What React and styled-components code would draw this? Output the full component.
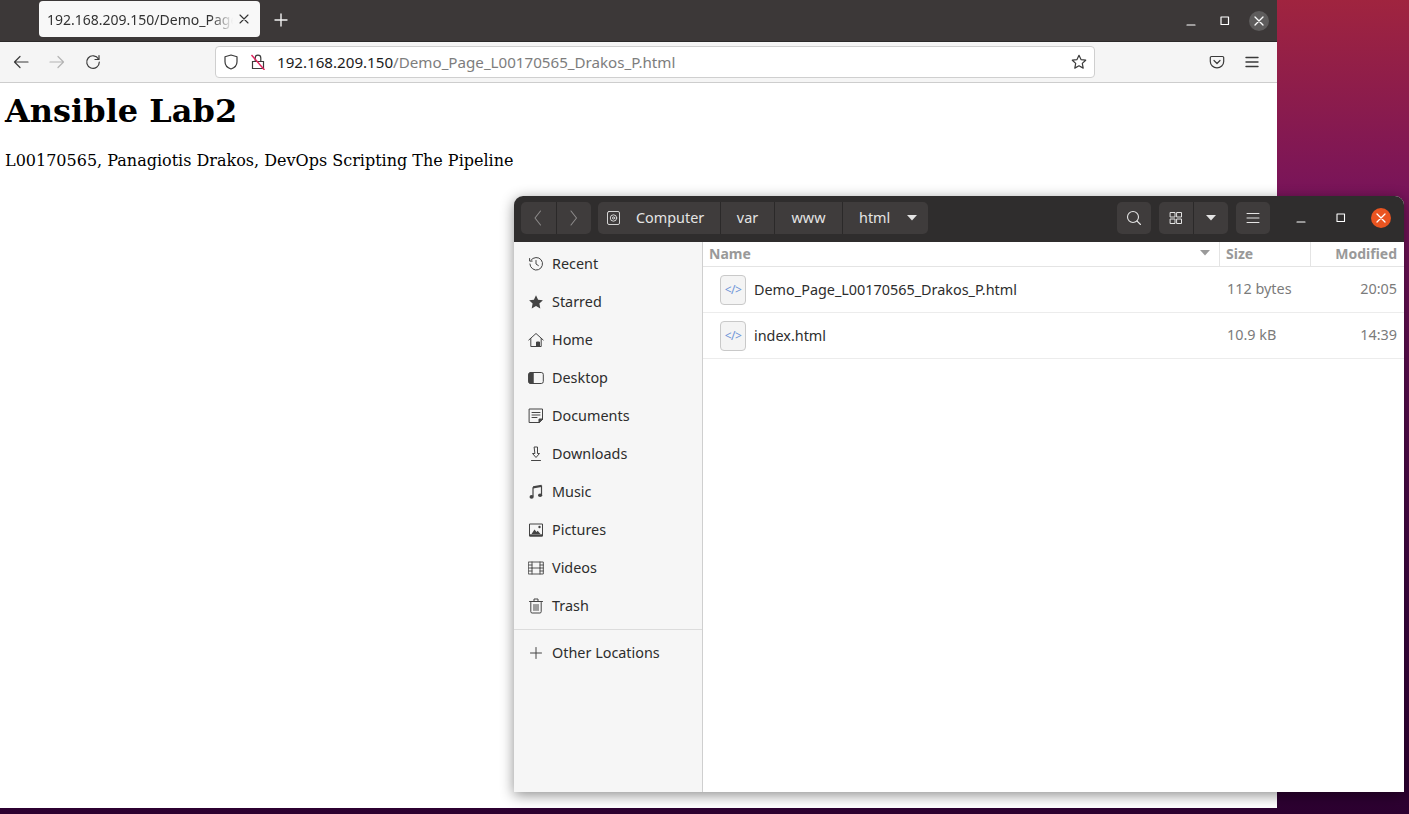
import React from "react";
import styled, { createGlobalStyle } from "styled-components";

const Global = createGlobalStyle`
  html, body { margin: 0; padding: 0; width: 1409px; height: 814px; overflow: hidden; }
  body { font-family: "Noto Sans", "Open Sans", sans-serif; }
`;

const Desktop = styled.div`
  position: relative;
  width: 1409px;
  height: 814px;
  overflow: hidden;
  background: linear-gradient(180deg, #a0243f 0%, #8c1c4c 12%, #78145a 24%, #5c0e50 45%, #3c0640 75%, #2c0030 100%);
`;

const Browser = styled.div`
  position: absolute;
  left: 0;
  top: 0;
  width: 1277px;
  height: 808px;
  display: flex;
  flex-direction: column;
  background: #fff;
`;

const TabStrip = styled.div`
  height: 42px;
  flex: none;
  display: flex;
  align-items: center;
  padding-left: 39px;
  background: #3c3838;
  border-bottom: 1px solid #2b2929;
  box-sizing: border-box;
`;

const Tab = styled.div`
  width: 221px;
  height: 36px;
  margin-top: -3px;
  box-sizing: border-box;
  padding: 0 11px 0 8px;
  display: flex;
  align-items: center;
  justify-content: space-between;
  background: #f8f8f8;
  border-radius: 4px;
  color: #333;
  font-size: 14px;
`;

const TabTitle = styled.span`
  width: 186px;
  white-space: nowrap;
  overflow: hidden;
  -webkit-mask-image: linear-gradient(to right, #000 88%, transparent 100%);
  mask-image: linear-gradient(to right, #000 88%, transparent 100%);
`;

const NewTab = styled.div`
  width: 14px;
  height: 14px;
  margin-left: 14px;
  margin-top: -1px;
  color: #f2f2f2;
  display: flex;
`;

const WinControls = styled.div`
  margin-left: auto;
  display: flex;
  align-items: center;
  gap: ${p => p.$gap}px;
  padding-right: ${p => p.$right}px;
`;

const CtlBox = styled.div`
  width: 20px;
  height: 20px;
  display: flex;
  align-items: center;
  justify-content: center;
  border-radius: 50%;
  color: #fff;
  background: ${p => p.$bg || "transparent"};
`;

const NavBar = styled.div`
  height: 41px;
  flex: none;
  box-sizing: border-box;
  display: flex;
  align-items: center;
  background: #f5f5f5;
  border-bottom: 1px solid #cdcdcd;
`;

const ToolIcon = styled.div`
  width: 16px;
  height: 16px;
  display: flex;
  flex: none;
  margin-left: ${p => p.$ml}px;
  color: ${p => p.$color || "#3a3a3a"};
`;

const UrlBar = styled.div`
  width: 880px;
  height: 32px;
  margin-left: 114px;
  box-sizing: border-box;
  display: flex;
  align-items: center;
  padding: 0 7px 0 7px;
  background: #fff;
  border: 1px solid #cfcfcf;
  border-radius: 4px;
  font-size: 15.15px;
  color: #7d7d7d;
`;

const UrlHost = styled.span`
  color: #1c1c1c;
`;

const UrlText = styled.span`
  margin-left: 11px;
  flex: 1;
  white-space: nowrap;
`;

const Page = styled.div`
  flex: 1;
  padding: 5px;
  background: #fff;
  color: #000;
  font-family: "DejaVu Serif", serif;
`;

const Heading = styled.h1`
  margin: 5px 0 0;
  font-size: 32px;
  line-height: 37px;
  font-weight: 700;
`;

const Para = styled.p`
  margin: 21px 0 0;
  font-size: 16px;
  line-height: 19px;
`;

const Files = styled.div`
  position: absolute;
  left: 514px;
  top: 196px;
  width: 890px;
  height: 596px;
  display: flex;
  flex-direction: column;
  background: #fff;
  border-radius: 9px 9px 0 0;
  box-shadow: 0 3px 14px rgba(0, 0, 0, 0.45);
  overflow: hidden;
`;

const HeaderBar = styled.div`
  height: 46px;
  flex: none;
  box-sizing: border-box;
  padding: 0 13px 2px 7px;
  display: flex;
  align-items: center;
  background: #2f2d2d;
  color: #e4e4e4;
  font-size: 14.4px;
`;

const BtnGroup = styled.div`
  display: flex;
  height: 32px;
  margin-left: ${p => p.$ml || 0}px;
  border-radius: 5px;
  overflow: hidden;
  background: #3f3c3c;
`;

const HeadBtn = styled.div`
  width: ${p => p.$w}px;
  padding-left: ${p => p.$pad || 0}px;
  display: flex;
  align-items: center;
  justify-content: ${p => (p.$pad ? "flex-start" : "center")};
  gap: ${p => p.$gap || 0}px;
  color: ${p => (p.$dim ? "#8c8a8a" : "#e4e4e4")};
  box-sizing: border-box;
  & + & { border-left: 1px solid #2b2929; }
`;

const CrumbText = styled.span`
  margin-top: -2px;
`;

const Body = styled.div`
  flex: 1;
  display: flex;
  min-height: 0;
`;

const Sidebar = styled.nav`
  width: 189px;
  flex: none;
  box-sizing: border-box;
  padding-top: 3px;
  background: #f6f6f6;
  border-right: 1px solid #cfcfcf;
  font-size: 14.4px;
  color: #2d2d2d;
`;

const Place = styled.div`
  height: ${p => p.$h || 38}px;
  display: flex;
  align-items: center;
  padding-left: 14px;
  gap: 8px;
`;

const PlaceLabel = styled.span`
  margin-top: -2px;
`;

const PlaceIcon = styled.div`
  width: 16px;
  height: 16px;
  flex: none;
  display: flex;
  color: #444;
`;

const Divider = styled.div`
  height: 1px;
  margin-top: 4px;
  background: #dcdcdc;
`;

const List = styled.div`
  flex: 1;
  min-width: 0;
  font-size: 14.4px;
`;

const Row = styled.div`
  display: grid;
  grid-template-columns: 517px 91px 93px;
  height: ${p => p.$h}px;
  box-sizing: border-box;
  align-items: center;
  border-bottom: 1px solid ${p => (p.$head ? "#e4e4e4" : "#ececec")};
`;

const ColHead = styled.div`
  height: 100%;
  box-sizing: border-box;
  display: flex;
  align-items: center;
  justify-content: ${p => (p.$end ? "flex-end" : "space-between")};
  padding: 0 ${p => (p.$end ? 6 : 9)}px 2px 6px;
  font-size: 14px;
  font-weight: 700;
  color: #999;
  border-right: 1px solid ${p => (p.$last ? "transparent" : "#e4e4e4")};
`;

const NameCell = styled.div`
  display: flex;
  align-items: center;
  gap: 8px;
  padding-left: 17px;
  color: #2d2d2d;
`;

const NameText = styled.span`
  margin-top: -1px;
`;

const SizeCell = styled.div`
  padding: 0 0 2px 7px;
  color: #7b7b7b;
`;

const TimeCell = styled.div`
  text-align: right;
  padding: 0 7px 2px 0;
  color: #7b7b7b;
`;

const FileBadge = styled.div`
  width: 26px;
  height: 30px;
  box-sizing: border-box;
  display: flex;
  align-items: center;
  justify-content: center;
  background: #f4f4f4;
  border: 1px solid #c9c9c9;
  border-radius: 4px;
  color: #6f94d8;
  font-size: 12px;
  line-height: 1;
  letter-spacing: -0.5px;
`;

const Svg = ({ w = 16, h = 16, vb = "0 0 16 16", sw = 1, children }) => (
  <svg width={w} height={h} viewBox={vb} fill="none" stroke="currentColor" strokeWidth={sw} strokeLinecap="round" strokeLinejoin="round">
    {children}
  </svg>
);

const Cross = ({ s = 10, sw = 1.3 }) => (
  <Svg w={s} h={s} vb="0 0 10 10" sw={sw}><path d="M1 1l8 8M9 1l-8 8" /></Svg>
);

const Burger = ({ sw = 1.4 }) => (
  <Svg sw={sw}><path d="M2 3.5h12M2 8h12M2 12.5h12" /></Svg>
);

const Caret = ({ color = "currentColor" }) => (
  <svg width="10" height="6" viewBox="0 0 10 6"><path d="M0 0h10L5 5.5z" fill={color} /></svg>
);

const places = [
  ["Recent", <Svg key="r"><path d="M3 4.2A6.3 6.3 0 1 1 1.9 8" /><path d="M1.6 2.5v2.6h2.6M8 4.5V8l2.4 1.6" /></Svg>],
  ["Starred", <svg key="s" width="16" height="16" viewBox="0 0 16 16"><path d="M8 1.3l2.1 4.4 4.8.6-3.5 3.3.9 4.8L8 12.1l-4.3 2.3.9-4.8L1.1 6.3l4.8-.6z" fill="#444" /></svg>],
  ["Home", <Svg key="h"><path d="M.8 8L8 1.5 15.2 8" /><path d="M2.8 6.5v8h10.4v-8" /><path d="M8.5 14.5V10h3v4.5" fill="currentColor" /></Svg>],
  ["Desktop", <Svg key="d"><rect x=".7" y="2.5" width="14.6" height="11" rx="2" /><path d="M.7 4.5a2 2 0 0 1 2-2h2.5v11H2.7a2 2 0 0 1-2-2z" fill="currentColor" /></Svg>],
  ["Documents", <Svg key="doc"><path d="M1.5 1h13v10L11 14.5H1.5z" /><path d="M4 4.5h8M4 7h8M4 9.5h5" /><path d="M14.5 11H11v3.5z" fill="currentColor" /></Svg>],
  ["Downloads", <Svg key="dl"><path d="M6.5 1h3v6.5h2L8 11.5 4.5 7.5h2z" /><path d="M3.5 14.5h9" /></Svg>],
  ["Music", <svg key="m" width="16" height="16" viewBox="0 0 16 16"><path d="M5 3.2V12.5M13.5 1.6v9.3" stroke="#444" strokeWidth="1.2" /><path d="M5 2.2l8.5-1.4v2.2L5 4.4z" fill="#444" /><ellipse cx="3.6" cy="12.9" rx="2.1" ry="1.8" fill="#444" /><ellipse cx="12.1" cy="11.3" rx="2.1" ry="1.8" fill="#444" /></svg>],
  ["Pictures", <svg key="p" width="16" height="16" viewBox="0 0 16 16"><path d="M1.5 2h13v12h-13z" fill="none" stroke="#444" strokeWidth="1" /><path d="M1.5 12.3h13V14.5h-13z" fill="#444" /><path d="M3.5 12l3-4.5 2 2.5 1.2-1.2L12.5 12z" fill="#444" /><circle cx="11.5" cy="5" r="1.2" fill="#444" /></svg>],
  ["Videos", <Svg key="v" sw={0.9}><rect x=".7" y="2" width="14.6" height="12" /><path d="M4 2v12M12 2v12M4 8h8M.7 5h3.3M.7 8h3.3M.7 11h3.3M12 5h3.3M12 8h3.3M12 11h3.3" /></Svg>],
  ["Trash", <Svg key="t"><path d="M2.8 4.5v9.2a1.3 1.3 0 0 0 1.3 1.3h7.8a1.3 1.3 0 0 0 1.3-1.3V4.5" /><path d="M1.5 3.5h13M6 3.2V1h4v2.2M6 6.5v6M8 6.5v6M10 6.5v6" /></Svg>],
];

const files = [
  ["Demo_Page_L00170565_Drakos_P.html", "112 bytes", "20:05"],
  ["index.html", "10.9 kB", "14:39"],
];

const App = () => (
  <Desktop>
    <Global />
    <Browser>
      <TabStrip>
        <Tab>
          <TabTitle>192.168.209.150/Demo_Page_L00170565_Drakos_P.html</TabTitle>
          <Cross sw={1.1} />
        </Tab>
        <NewTab>
          <Svg w={14} h={14} vb="0 0 14 14" sw={1.4}><path d="M7 1v12M1 7h12" /></Svg>
        </NewTab>
        <WinControls $gap={14} $right={8}>
          <CtlBox><Svg w={10} h={10} vb="0 0 10 10" sw={1.2}><path d="M1 9h8" /></Svg></CtlBox>
          <CtlBox><Svg w={10} h={10} vb="0 0 10 10" sw={1.2}><rect x="1" y="1" width="7.5" height="7.5" /></Svg></CtlBox>
          <CtlBox $bg="#5e5c5c"><Cross /></CtlBox>
        </WinControls>
      </TabStrip>
      <NavBar>
        <ToolIcon $ml={13}>
          <Svg sw={1.2}><path d="M15 8H1.5M7 2.5L1.5 8 7 13.5" /></Svg>
        </ToolIcon>
        <ToolIcon $ml={20} $color="#b4b4b4">
          <Svg sw={1.2}><path d="M1 8h13.5M9 2.5L14.5 8 9 13.5" /></Svg>
        </ToolIcon>
        <ToolIcon $ml={20}>
          <Svg sw={1.2}><path d="M13.5 5A6.3 6.3 0 1 0 14.3 8" /><path d="M14 1.5V5.5H10" /></Svg>
        </ToolIcon>
        <UrlBar>
          <ToolIcon $ml={0}>
            <Svg sw={1.2}><path d="M8 1l6 1.8v5C14 11.5 11 14 8 15 5 14 2 11.5 2 7.8v-5z" /></Svg>
          </ToolIcon>
          <ToolIcon $ml={11}>
            <svg width="16" height="16" viewBox="0 0 16 16" fill="none">
              <path d="M5.2 7.5V4a2.8 2.8 0 0 1 5.6 0v3.5M2.5 7.5h11v7h-11z" stroke="#3a3a3a" strokeWidth="1.2" />
              <path d="M1.5 1l13 15" stroke="#e0245e" strokeWidth="1.4" />
            </svg>
          </ToolIcon>
          <UrlText><UrlHost>192.168.209.150</UrlHost>/Demo_Page_L00170565_Drakos_P.html</UrlText>
          <ToolIcon $ml={0}>
            <Svg sw={1.2}><path d="M8 1.3l2 4.3 4.7.6-3.4 3.2.9 4.7L8 11.8l-4.2 2.3.9-4.7-3.4-3.2 4.7-.6z" /></Svg>
          </ToolIcon>
        </UrlBar>
        <ToolIcon $ml={114}>
          <Svg sw={1.2}><path d="M2.5 2.5h11A1.2 1.2 0 0 1 14.7 3.7v3.8c0 3.6-3 6.3-6.7 6.3S1.3 11.1 1.3 7.5V3.7A1.2 1.2 0 0 1 2.5 2.5z" /><path d="M5 6.5l3 3 3-3" /></Svg>
        </ToolIcon>
        <ToolIcon $ml={19}><Burger /></ToolIcon>
      </NavBar>
      <Page>
        <Heading>Ansible Lab2</Heading>
        <Para>L00170565, Panagiotis Drakos, DevOps Scripting The Pipeline</Para>
      </Page>
    </Browser>

    <Files>
      <HeaderBar>
        <BtnGroup>
          <HeadBtn $w={35} $dim><Svg sw={1.1}><path d="M9.5 1L4 8l5.5 7" /></Svg></HeadBtn>
          <HeadBtn $w={35} $dim><Svg sw={1.1}><path d="M5 1l5.5 7L5 15" /></Svg></HeadBtn>
        </BtnGroup>
        <BtnGroup $ml={7}>
          <HeadBtn $w={122} $pad={8} $gap={14}>
            <Svg sw={0.9}><rect x="1.5" y="1.5" width="12" height="13" rx="1.5" /><circle cx="7.5" cy="8" r="3.2" /><circle cx="7.5" cy="8" r="1.1" /></Svg>
            <CrumbText>Computer</CrumbText>
          </HeadBtn>
          <HeadBtn $w={54}><CrumbText>var</CrumbText></HeadBtn>
          <HeadBtn $w={68}><CrumbText>www</CrumbText></HeadBtn>
          <HeadBtn $w={86} $pad={16} $gap={17}><CrumbText>html</CrumbText> <Caret /></HeadBtn>
        </BtnGroup>
        <BtnGroup $ml={189}>
          <HeadBtn $w={34}><Svg sw={1.1}><circle cx="7" cy="7" r="5.5" /><path d="M11 11l3.5 3.5" /></Svg></HeadBtn>
        </BtnGroup>
        <BtnGroup $ml={8}>
          <HeadBtn $w={34}><Svg><rect x="2.5" y="2.5" width="4.5" height="4.5" /><rect x="9" y="2.5" width="4.5" height="4.5" /><rect x="2.5" y="9" width="4.5" height="4.5" /><rect x="9" y="9" width="4.5" height="4.5" /></Svg></HeadBtn>
          <HeadBtn $w={35}><Caret /></HeadBtn>
        </BtnGroup>
        <BtnGroup $ml={8}>
          <HeadBtn $w={34}><Burger sw={1} /></HeadBtn>
        </BtnGroup>
        <WinControls $gap={20} $right={0}>
          <CtlBox><Svg w={10} h={10} vb="0 0 10 10" sw={1.1}><path d="M1 9h8" /></Svg></CtlBox>
          <CtlBox><Svg w={10} h={10} vb="0 0 10 10" sw={1.1}><rect x="1" y="1" width="7.5" height="7.5" /></Svg></CtlBox>
          <CtlBox $bg="#e95420"><Cross /></CtlBox>
        </WinControls>
      </HeaderBar>
      <Body>
        <Sidebar>
          {places.map(([label, icon]) => (
            <Place key={label}>
              <PlaceIcon>{icon}</PlaceIcon>
              <PlaceLabel>{label}</PlaceLabel>
            </Place>
          ))}
          <Divider />
          <Place $h={46}>
            <PlaceIcon><Svg><path d="M8 2.5v11M2.5 8h11" /></Svg></PlaceIcon>
            <PlaceLabel>Other Locations</PlaceLabel>
          </Place>
        </Sidebar>
        <List>
          <Row $h={25} $head>
            <ColHead>Name <Caret color="#9a9a9a" /></ColHead>
            <ColHead>Size</ColHead>
            <ColHead $end $last>Modified</ColHead>
          </Row>
          {files.map(([name, size, time]) => (
            <Row key={name} $h={46}>
              <NameCell>
                <FileBadge>&lt;/&gt;</FileBadge>
                <NameText>{name}</NameText>
              </NameCell>
              <SizeCell>{size}</SizeCell>
              <TimeCell>{time}</TimeCell>
            </Row>
          ))}
        </List>
      </Body>
    </Files>
  </Desktop>
);

export default App;
